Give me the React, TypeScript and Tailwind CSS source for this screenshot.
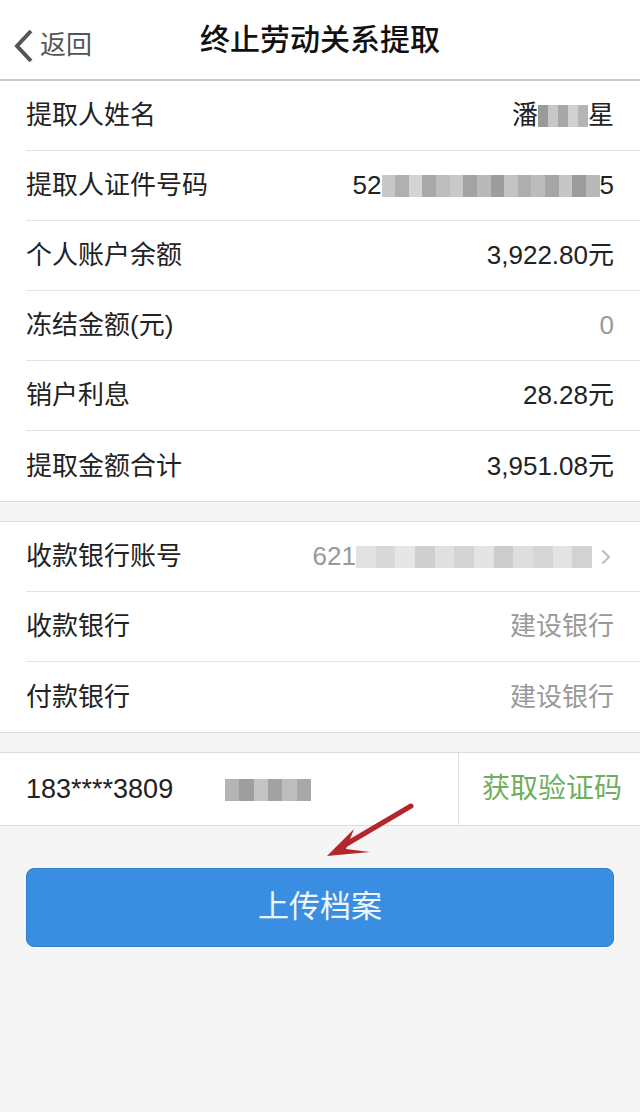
import { ChevronRight } from "lucide-react";

const font = { fontFamily: '"Liberation Sans", "Noto Sans CJK SC", sans-serif' };

const Blur = ({ w, cells }: { w: number; cells: string[] }) => (
  <span className="inline-flex h-[22px] align-middle" style={{ width: w }}>
    {cells.map((c, i) => (
      <span key={i} className="h-full flex-1" style={{ background: c }} />
    ))}
  </span>
);

const Row = ({
  label,
  children,
  last,
}: {
  label: string;
  children: React.ReactNode;
  last?: boolean;
}) => (
  <div className="pl-[26px]">
    <div
      className={`flex h-[70px] items-center justify-between pr-[26px] ${
        last ? "" : "border-b border-[#e3e3e3]"
      }`}
    >
      <span className="text-[26px] text-[#222]">{label}</span>
      <div className="flex items-center text-[26px]">{children}</div>
    </div>
  </div>
);

export default function App() {
  return (
    <div className="relative min-h-[1112px] w-[640px] bg-[#f5f5f5]" style={font}>
      {/* header */}
      <div className="relative flex h-[81px] items-center justify-center border-b-2 border-[#c9c9c9] bg-white">
        <div className="absolute left-[12px] top-[26px] flex items-center gap-[6px]">
          <svg width="22" height="34" viewBox="0 0 22 34">
            <path d="M19 2 L5 17 L19 32" fill="none" stroke="#555" strokeWidth="4" />
          </svg>
          <span className="text-[26px] text-[#555]">返回</span>
        </div>
        <span className="text-[30px] font-medium text-[#111]">终止劳动关系提取</span>
      </div>

      <div className="border-b border-[#dcdcdc] bg-white">
        <Row label="提取人姓名">
          <span className="text-[#222]">潘</span>
          <Blur w={50} cells={["#9a9a9a", "#c8c8c8", "#a8a8a8", "#d0d0d0", "#b5b5b5"]} />
          <span className="text-[#222]">星</span>
        </Row>
        <Row label="提取人证件号码">
          <span className="text-[#222]">52</span>
          <Blur
            w={218}
            cells={[
              "#c8c8c8", "#b0b0b0", "#d3d3d3", "#a9a9a9", "#bdbdbd", "#c9c9c9",
              "#a3a3a3", "#b9b9b9", "#9d9d9d", "#c3c3c3", "#aeaeae", "#bcbcbc",
              "#a6a6a6", "#c6c6c6", "#9c9c9c", "#b8b8b8",
            ]}
          />
          <span className="text-[#222]">5</span>
        </Row>
        <Row label="个人账户余额">
          <span className="text-[#222]">3,922.80元</span>
        </Row>
        <Row label="冻结金额(元)">
          <span className="text-[#999]">0</span>
        </Row>
        <Row label="销户利息">
          <span className="text-[#222]">28.28元</span>
        </Row>
        <Row label="提取金额合计" last>
          <span className="text-[#222]">3,951.08元</span>
        </Row>
      </div>

      <div className="mt-[19px] border-y border-[#dcdcdc] bg-white">
        <div className="pl-[26px]">
          <div className="flex h-[70px] items-center justify-between border-b border-[#e3e3e3] pr-[22px]">
            <span className="text-[26px] text-[#222]">收款银行账号</span>
            <div className="flex items-center text-[26px] text-[#999]">
              <span>621</span>
              <Blur
                w={236}
                cells={[
                  "#e2e2e2", "#d8d8d8", "#e6e6e6", "#cfcfcf", "#e0e0e0", "#d4d4d4",
                  "#e4e4e4", "#cccccc", "#dedede", "#d6d6d6", "#e3e3e3", "#d2d2d2",
                ]}
              />
              <ChevronRight className="ml-[2px] h-[24px] w-[24px] text-[#bdbdbd]" strokeWidth={2} />
            </div>
          </div>
        </div>
        <Row label="收款银行">
          <span className="text-[#999]">建设银行</span>
        </Row>
        <Row label="付款银行" last>
          <span className="text-[#999]">建设银行</span>
        </Row>
      </div>

      <div className="mt-[19px] flex h-[74px] border-y border-[#dcdcdc] bg-white">
        <div className="flex flex-1 items-center pl-[26px]">
          <span className="text-[27px] text-[#222]">183****3809</span>
          <span className="ml-[52px]">
            <Blur w={86} cells={["#b4b4b4", "#9e9e9e", "#c4c4c4", "#a2a2a2", "#bdbdbd", "#a8a8a8"]} />
          </span>
        </div>
        <div className="flex w-[182px] items-center justify-end border-l border-[#e0e0e0] pr-[18px]">
          <span className="text-[28px] text-[#6fae5a]">获取验证码</span>
        </div>
      </div>

      <div className="px-[26px] pt-[42px]">
        <button className="flex h-[79px] w-full items-center justify-center rounded-[8px] border border-[#2f7fcf] bg-[#3a8ee2] text-[31px] text-[#eef5fc]">
          上传档案
        </button>
      </div>

      {/* red annotation arrow */}
      <svg className="absolute left-[320px] top-[798px]" width="100" height="64" viewBox="0 0 100 64">
        <path d="M91 8 L18 51" stroke="#b3262a" strokeWidth="5" strokeLinecap="round" />
        <path d="M7 58 L34 31 L26 51 L50 54 Z" fill="#b3262a" />
      </svg>
    </div>
  );
}
